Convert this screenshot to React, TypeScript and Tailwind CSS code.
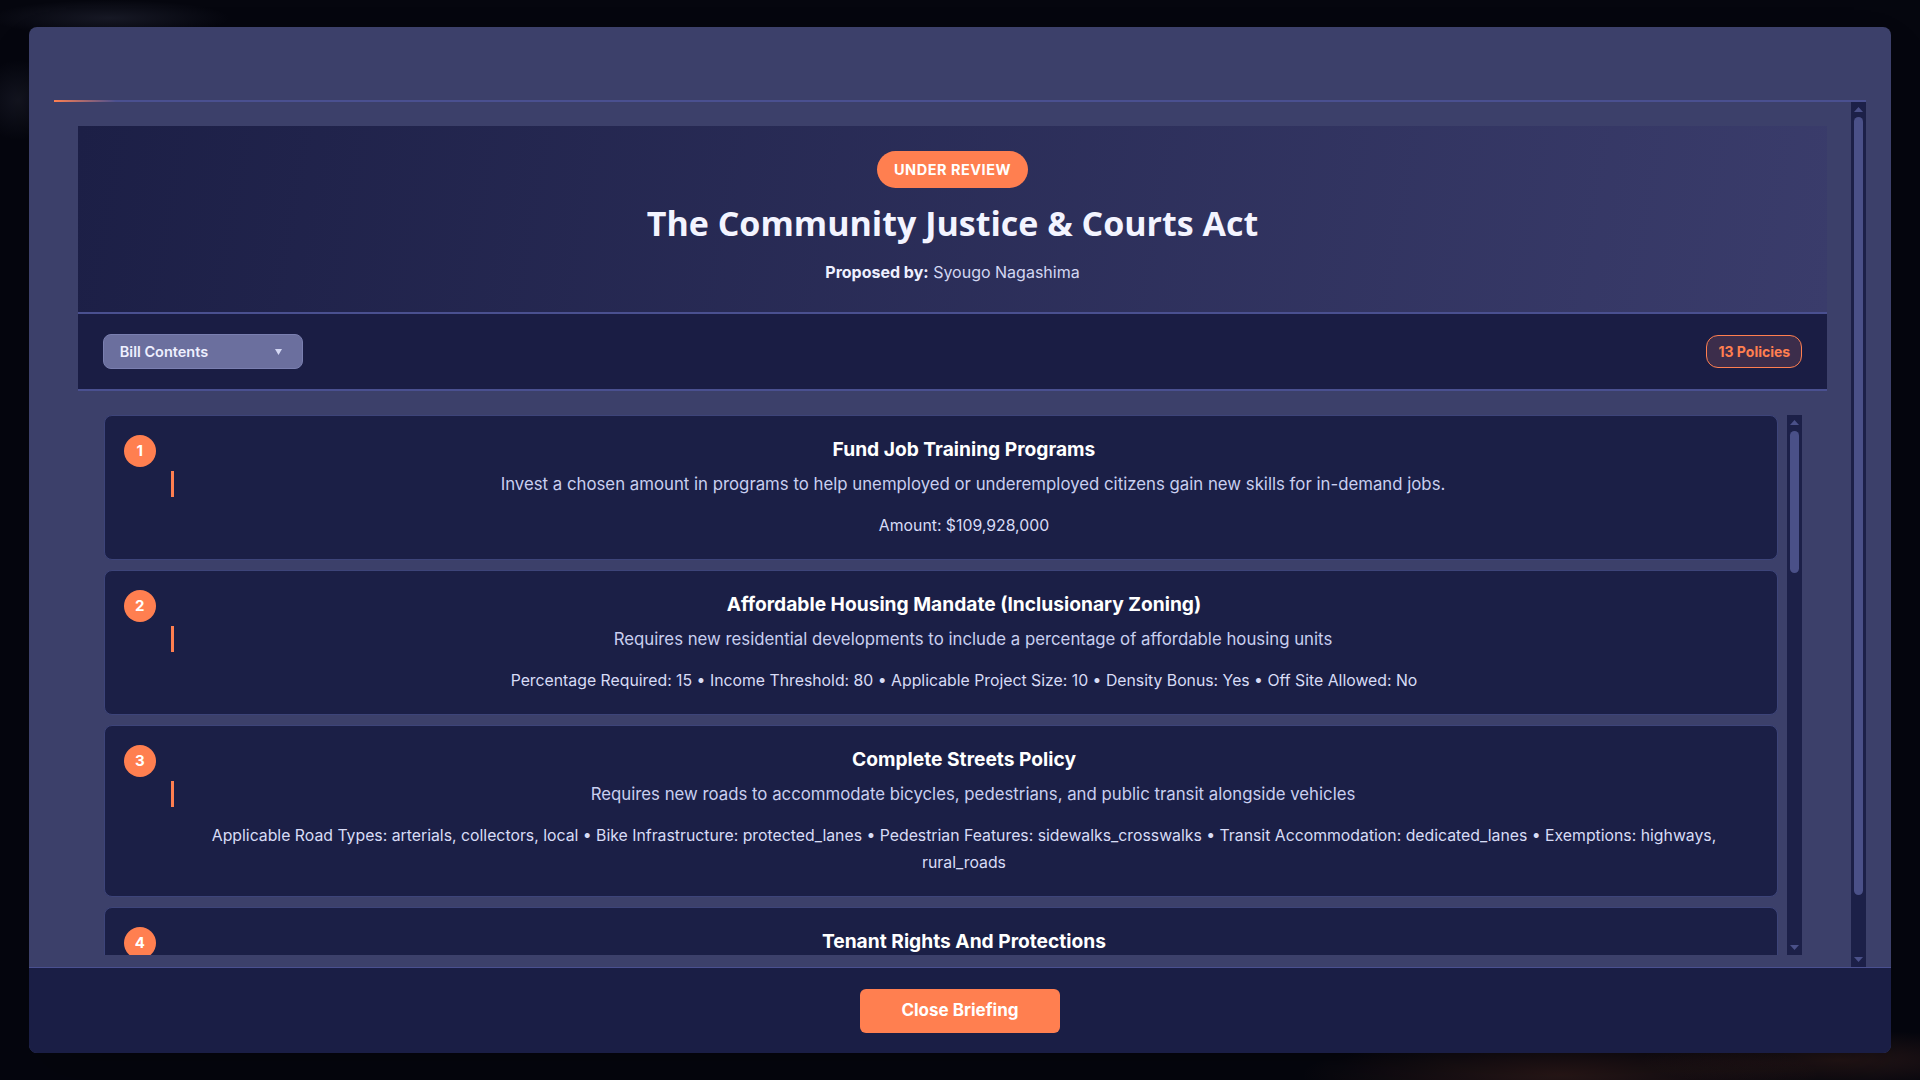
import React from "react";

type Policy = {
  title: string;
  description: string;
  details: string;
};

const policies: Policy[] = [
  {
    title: "Fund Job Training Programs",
    description:
      "Invest a chosen amount in programs to help unemployed or underemployed citizens gain new skills for in-demand jobs.",
    details: "Amount: $109,928,000",
  },
  {
    title: "Affordable Housing Mandate (Inclusionary Zoning)",
    description:
      "Requires new residential developments to include a percentage of affordable housing units",
    details:
      "Percentage Required: 15 • Income Threshold: 80 • Applicable Project Size: 10 • Density Bonus: Yes • Off Site Allowed: No",
  },
  {
    title: "Complete Streets Policy",
    description:
      "Requires new roads to accommodate bicycles, pedestrians, and public transit alongside vehicles",
    details:
      "Applicable Road Types: arterials, collectors, local • Bike Infrastructure: protected_lanes • Pedestrian Features: sidewalks_crosswalks • Transit Accommodation: dedicated_lanes • Exemptions: highways, rural_roads",
  },
  {
    title: "Tenant Rights And Protections",
    description:
      "Strengthens protections for renters against unfair evictions and excessive rent increases",
    details: "Just Cause Eviction: Yes • Notice Period: 60 • Relocation Assistance: Yes",
  },
  {
    title: "Public Defender Funding",
    description:
      "Increases funding for public defenders to ensure fair legal representation for all citizens",
    details: "Amount: $42,500,000",
  },
  {
    title: "Community Court Program",
    description:
      "Establishes neighborhood courts that handle low-level offenses with community service and support",
    details: "Eligible Offenses: misdemeanors • Diversion Rate: 70 • Community Service Hours: 40",
  },
  {
    title: "Bail Reform",
    description: "Reduces reliance on cash bail for non-violent pretrial defendants",
    details: "Cash Bail Eliminated: non_violent • Risk Assessment: Yes",
  },
  {
    title: "Restorative Justice Initiative",
    description:
      "Funds programs that bring offenders and victims together to repair harm caused by crime",
    details: "Amount: $18,200,000",
  },
  {
    title: "Court Modernization Fund",
    description: "Upgrades court technology to reduce case backlogs and speed up hearings",
    details: "Amount: $27,750,000",
  },
  {
    title: "Juvenile Justice Reform",
    description:
      "Prioritizes rehabilitation and education over detention for young offenders",
    details: "Minimum Age: 14 • Diversion Programs: Yes • Record Sealing: Yes",
  },
  {
    title: "Legal Aid Expansion",
    description: "Expands free civil legal services for low-income households",
    details: "Income Threshold: 200 • Covered Matters: housing, family, employment",
  },
  {
    title: "Victim Support Services",
    description: "Provides counseling, compensation and advocacy for victims of crime",
    details: "Amount: $12,400,000",
  },
  {
    title: "Jury Duty Compensation",
    description: "Raises daily pay for jurors so that service is possible for working citizens",
    details: "Daily Rate: 50 • Employer Protection: Yes",
  },
];

// scrollbar look-alike (the browser hides real ones in screenshots)
function Scrollbar({ thumbClass }: { thumbClass: string }) {
  return (
    <div className="flex w-[15px] shrink-0 flex-col bg-[#1c2048]">
      <div className="flex h-[15px] shrink-0 items-center justify-center">
        <svg width="9" height="5" viewBox="0 0 9 5">
          <path d="M4.5 0L9 5H0Z" fill="#4a5088" />
        </svg>
      </div>
      <div className="min-h-0 flex-1 px-[3px]">
        <div className={`rounded-full bg-[#4a5088] ${thumbClass}`} />
      </div>
      <div className="flex h-[15px] shrink-0 items-center justify-center">
        <svg width="9" height="5" viewBox="0 0 9 5">
          <path d="M0 0H9L4.5 5Z" fill="#4a5088" />
        </svg>
      </div>
    </div>
  );
}

function PolicyCard({ policy, index }: { policy: Policy; index: number }) {
  return (
    <div className="relative shrink-0 rounded-lg border border-[#3d4479] bg-[#1b1f46] pb-5 pl-[66px] pr-5 pt-[19px]">
      <span className="absolute left-[19px] top-[19px] flex h-8 w-8 items-center justify-center rounded-full bg-[#ff7f50] text-[15px] font-bold text-white">
        {index + 1}
      </span>
      <h3 className="text-center text-[19.2px] font-bold leading-[28px] text-white">
        {policy.title}
      </h3>
      <p className="mt-[8px] border-l-[3px] border-[#ff7f50] pl-[15px] text-center text-[16.8px] leading-[26px] text-[#c9cff0]">
        {policy.description}
      </p>
      <p className="mt-[15px] text-center text-[15.8px] leading-[27px] text-[#d8dcf6]">
        {policy.details}
      </p>
    </div>
  );
}

export default function App() {
  return (
    <div
      className="flex h-screen w-full items-center justify-center bg-[#05060e] bg-[radial-gradient(ellipse_120px_18px_at_110px_18px,rgba(120,125,160,0.16),transparent),radial-gradient(ellipse_40px_40px_at_18px_100px,rgba(120,125,160,0.12),transparent),radial-gradient(ellipse_260px_40px_at_1560px_1075px,rgba(255,127,80,0.14),transparent),radial-gradient(ellipse_200px_30px_at_1840px_1060px,rgba(255,127,80,0.12),transparent)]"
      style={{ fontFamily: "Inter, 'Noto Sans', sans-serif" }}
    >
      <div className="flex h-[95vh] w-[97vw] flex-col overflow-hidden rounded-lg bg-[#3c406a] shadow-2xl">
        <div className="h-[73px] shrink-0" />
        <div className="mx-[25px] h-[2px] shrink-0 bg-[#4a5090]">
          <div className="h-full w-[62px] bg-linear-to-r from-[#ff7f50] to-transparent" />
        </div>
        <div className="mx-[25px] flex min-h-0 flex-1">
          <div className="min-w-0 flex-1 overflow-hidden px-6 pt-6">
            <div className="border-b-2 border-[#4a5090] bg-[linear-gradient(100deg,#1c1f46,#3a3c6b)] px-6 pb-[28px] pt-[25px] text-center">
              <span className="inline-block rounded-full bg-[#ff7f50] px-[17px] py-[9px] text-[14.5px] font-bold uppercase leading-[19px] tracking-[0.5px] text-white">
                Under Review
              </span>
              <h1
                className="mt-[14px] text-[34px] font-bold leading-[42px] text-[#f3f4ff]"
                style={{ fontFamily: "'Open Sans', Inter, sans-serif" }}
              >
                The Community Justice &amp; Courts Act
              </h1>
              <p className="mt-[16px] text-[16px] leading-6 text-[#d3d7f2]">
                <span className="font-bold text-[#eef0ff]">Proposed by:</span> Syougo Nagashima
              </p>
            </div>
            <div className="flex h-[77px] items-center justify-between border-b-2 border-[#4a5090] bg-[#1a1d44] px-[25px]">
              <div className="flex h-[35px] w-[200px] items-center justify-between rounded-lg border border-[#7a7fb0] bg-[#6b6f9e] pl-4 pr-[20px] text-[14.5px] font-semibold text-[#eef0ff]">
                <span>Bill Contents</span>
                <svg width="7" height="6" viewBox="0 0 7 6">
                  <path d="M0 0H7L3.5 6Z" fill="#d4d8f4" />
                </svg>
              </div>
              <div className="flex h-[33px] items-center rounded-xl border border-[#ff7f50] bg-[#3c2d4b] px-[11px] text-[14px] font-bold text-[#ff7f50]">
                13 Policies
              </div>
            </div>
            <div className="flex pl-[26px] pr-[25px] pt-[24px]">
              <div className="flex h-[540px] min-w-0 flex-1 flex-col gap-[10px] overflow-hidden pr-[9px]">
                {policies.map((p, i) => (
                  <PolicyCard key={p.title} policy={p} index={i} />
                ))}
              </div>
              <Scrollbar thumbClass="mt-px h-[142px]" />
            </div>
          </div>
          <Scrollbar thumbClass="h-[778px]" />
        </div>
        <div className="flex h-[86px] shrink-0 items-center justify-center border-t border-[#4a5090] bg-[#1a1e45]">
          <button className="h-[44px] w-[200px] rounded-md bg-[#ff7f50] text-[17px] font-bold text-white">
            Close Briefing
          </button>
        </div>
      </div>
    </div>
  );
}
